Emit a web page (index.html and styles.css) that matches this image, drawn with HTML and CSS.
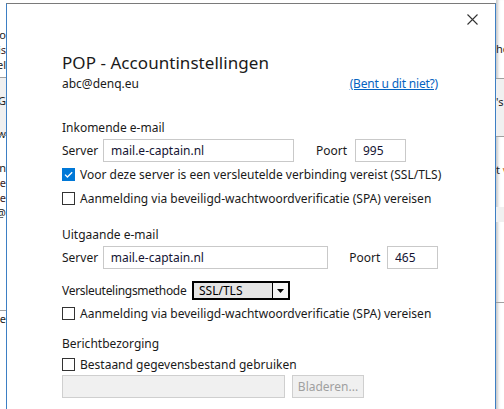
FILE: index.html
```
<!DOCTYPE html>
<html>

<head>
  <meta charset="UTF-8">
  <title>POP - Accountinstellingen</title>
  <link rel="stylesheet" href="styles.css">
</head>

<body>
  <div class="desk">
    <div class="bg-win bg-left">
      <div class="bg-top"></div>
      <div class="spacer" style="height: 24px"></div>
      <div class="frag">co</div>
      <div class="frag red">is</div>
      <div class="frag">el</div>
      <div class="spacer" style="height: 5px"></div>
      <div class="bg-line"></div>
      <div class="bg-band">
        <div class="frag">G</div>
        <div class="spacer" style="height: 18px"></div>
        <div class="frag">w</div>
      </div>
      <div class="bg-line"></div>
      <div class="spacer" style="height: 24px"></div>
      <div class="frag">n</div>
      <div class="frag red">de</div>
      <div class="frag red">de</div>
      <div class="frag">@</div>
      <div class="spacer" style="height: 90px"></div>
      <div class="bg-line"></div>
      <div class="frag">e</div>
    </div>

    <div class="dialog">
      <div class="title-bar">
        <button class="close-btn" title="Sluiten">
          <svg width="11" height="11" viewBox="0 0 11 11">
            <path d="M0.5 0.5 L10.5 10.5 M10.5 0.5 L0.5 10.5" stroke="#333" stroke-width="1.1" fill="none"/>
          </svg>
        </button>
      </div>

      <div class="content">
        <h1>POP - Accountinstellingen</h1>
        <div class="row account-row">
          <span>abc@denq.eu</span>
          <a href="#" class="link">(Bent u dit niet?)</a>
        </div>

        <div class="row section-title incoming-title">Inkomende e-mail</div>
        <div class="row field-row">
          <label class="field-label" for="inServer">Server</label>
          <input type="text" id="inServer" class="server-in" value="mail.e-captain.nl">
          <label class="port-label" for="inPort">Poort</label>
          <input type="text" id="inPort" class="port-in" value="995">
        </div>
        <div class="row check-row first-check">
          <span class="box checked">
            <svg width="11" height="11" viewBox="0 0 11 11">
              <path d="M2 5.6 L4.4 8 L9.2 3.2" stroke="#fff" stroke-width="1.3" fill="none"/>
            </svg>
          </span>
          <span>Voor deze server is een versleutelde verbinding vereist (SSL/TLS)</span>
        </div>
        <div class="row check-row">
          <span class="box"></span>
          <span>Aanmelding via beveiligd-wachtwoordverificatie (SPA) vereisen</span>
        </div>

        <div class="row section-title outgoing-title">Uitgaande e-mail</div>
        <div class="row field-row">
          <label class="field-label" for="outServer">Server</label>
          <input type="text" id="outServer" class="server-out" value="mail.e-captain.nl">
          <label class="port-label port-label-out" for="outPort">Poort</label>
          <input type="text" id="outPort" class="port-in" value="465">
        </div>
        <div class="row crypt-row">
          <span class="crypt-label">Versleutelingsmethode</span>
          <div class="dropdown">
            <span class="dropdown-value">SSL/TLS</span>
            <span class="dropdown-arrow">
              <svg width="7" height="4" viewBox="0 0 7 4"><path d="M0 0 H7 L3.5 4 Z" fill="#000"/></svg>
            </span>
          </div>
        </div>
        <div class="row check-row spa-out">
          <span class="box"></span>
          <span>Aanmelding via beveiligd-wachtwoordverificatie (SPA) vereisen</span>
        </div>

        <div class="row section-title delivery-title">Berichtbezorging</div>
        <div class="row check-row existing-check">
          <span class="box"></span>
          <span>Bestaand gegevensbestand gebruiken</span>
        </div>
        <div class="row file-row">
          <input type="text" class="file-in" disabled>
          <button class="browse-btn" disabled>Bladeren...</button>
        </div>
      </div>
    </div>

    <div class="bg-win bg-right">
      <div class="bg-top"></div>
      <div class="spacer" style="height: 38px"></div>
      <div class="frag left">hc</div>
      <div class="spacer" style="height: 22px"></div>
      <div class="bg-line"></div>
      <div class="bg-band">
        <div class="frag left">'s</div>
      </div>
      <div class="bg-line"></div>
      <div class="spacer" style="height: 25px"></div>
      <div class="frag left">t <span class="orange">v</span></div>
      <div class="spacer" style="height: 30px"></div>
      <div class="bg-band thin"></div>
      <div class="spacer" style="height: 80px"></div>
      <div class="bg-line"></div>
    </div>
  </div>
</body>

</html>
```

FILE: styles.css
```
body {
  margin: 0;
  font-family: "Noto Sans", "Open Sans", sans-serif;
  font-size: 12px;
  color: #1a1a1a;
  background: #fff;
}

.desk {
  display: flex;
  width: 504px;
  height: 409px;
  overflow: hidden;
}

/* windows behind the dialog */
.bg-win {
  display: flex;
  flex-direction: column;
  overflow: hidden;
  background: #fff;
  flex-shrink: 0;
}

.bg-left {
  width: 6px;
}

.bg-right {
  width: 8px;
  box-shadow: inset 4px 0 3px -2px rgba(0, 0, 0, 0.22);
}

.bg-top {
  height: 3px;
  flex-shrink: 0;
}

.spacer {
  flex-shrink: 0;
}

.frag {
  height: 15px;
  line-height: 15px;
  font-size: 11px;
  white-space: nowrap;
  direction: rtl;
  color: #222;
  overflow: hidden;
  flex-shrink: 0;
}

.frag.left {
  direction: ltr;
}

.frag.red {
  color: #3a1d1d;
}

.orange {
  color: #c86a1a;
}

.bg-line {
  height: 1px;
  background: #a0a0a0;
  flex-shrink: 0;
}

.bg-band {
  background: #f0f0f0;
  padding-top: 15px;
  height: 57px;
  box-sizing: border-box;
  flex-shrink: 0;
}

.bg-band.thin {
  height: 15px;
  padding: 0;
}

/* dialog */
.dialog {
  width: 490px;
  margin-top: 3px;
  border-top: 1px solid #7a7a7a;
  border-left: 1px solid #3d7fc4;
  border-right: 1px solid #3d7fc4;
  box-sizing: border-box;
  background: #fff;
  flex-shrink: 0;
}

.title-bar {
  display: flex;
  justify-content: flex-end;
  height: 46px;
  padding: 10px 17px 0 0;
  box-sizing: border-box;
}

.close-btn {
  background: none;
  border: none;
  padding: 0;
  width: 11px;
  height: 11px;
  cursor: pointer;
}

.close-btn svg {
  display: block;
}

.content {
  padding-left: 55px;
  width: 376px;
}

h1 {
  margin: 0;
  height: 25px;
  line-height: 25px;
  font-size: 17px;
  font-weight: normal;
  color: #1a1a1a;
  letter-spacing: 0.05px;
}

.row {
  display: flex;
  align-items: center;
  white-space: nowrap;
}

.account-row {
  height: 16px;
  justify-content: space-between;
}

.link {
  color: #0563c1;
  text-decoration: underline;
  letter-spacing: -0.2px;
}

.section-title {
  height: 16px;
}

.incoming-title {
  margin-top: 28px;
}

.outgoing-title {
  margin-top: 19px;
}

.delivery-title {
  margin-top: 13px;
}

.field-row {
  height: 23px;
  margin-top: 4px;
}

.field-label {
  width: 41px;
}

input[type="text"] {
  height: 23px;
  border: 1px solid #c9c9c9;
  padding: 0 7px;
  box-sizing: border-box;
  font-family: inherit;
  font-size: 12px;
  color: #141433;
  margin: 0;
  outline: none;
}

.server-in {
  width: 191px;
}

.server-out {
  width: 227px;
}

.port-label {
  margin-left: 22px;
  width: 39px;
}

.port-label-out {
  margin-left: 21px;
  width: 38px;
}

.port-in {
  width: 51px;
  flex-shrink: 0;
}

.check-row {
  height: 17px;
  margin-top: 7px;
  gap: 5px;
}

.first-check {
  margin-top: 4px;
}

.spa-out {
  margin-top: 5px;
}

.existing-check {
  margin-top: 5px;
}

.box {
  width: 13px;
  height: 13px;
  border: 1px solid #333;
  box-sizing: border-box;
  background: #fff;
  display: flex;
  align-items: center;
  justify-content: center;
  flex-shrink: 0;
}

.box.checked {
  background: #0078d7;
  border-color: #0078d7;
}

.crypt-row {
  height: 19px;
  margin-top: 12px;
}

.crypt-label {
  width: 130px;
  letter-spacing: -0.3px;
}

.dropdown {
  display: flex;
  width: 98px;
  height: 19px;
  border: 2px solid #000;
  box-sizing: border-box;
  background: #e5e5e5;
}

.dropdown-value {
  flex: 1;
  padding-left: 5px;
  line-height: 15px;
  color: #000;
}

.dropdown-arrow {
  width: 15px;
  border-left: 1px solid #000;
  background: #f4f4f4;
  display: flex;
  align-items: center;
  justify-content: center;
}

.file-row {
  height: 23px;
  margin-top: 2px;
  gap: 7px;
}

.file-in {
  width: 223px;
}

input[type="text"]:disabled {
  background: #f0f0f0;
  border-color: #cfcfcf;
}

.browse-btn {
  width: 72px;
  height: 23px;
  border: 1px solid #cfcfcf;
  background: #f0f0f0;
  color: #a0a0a0;
  font-family: inherit;
  font-size: 12px;
  padding: 0;
}
```
